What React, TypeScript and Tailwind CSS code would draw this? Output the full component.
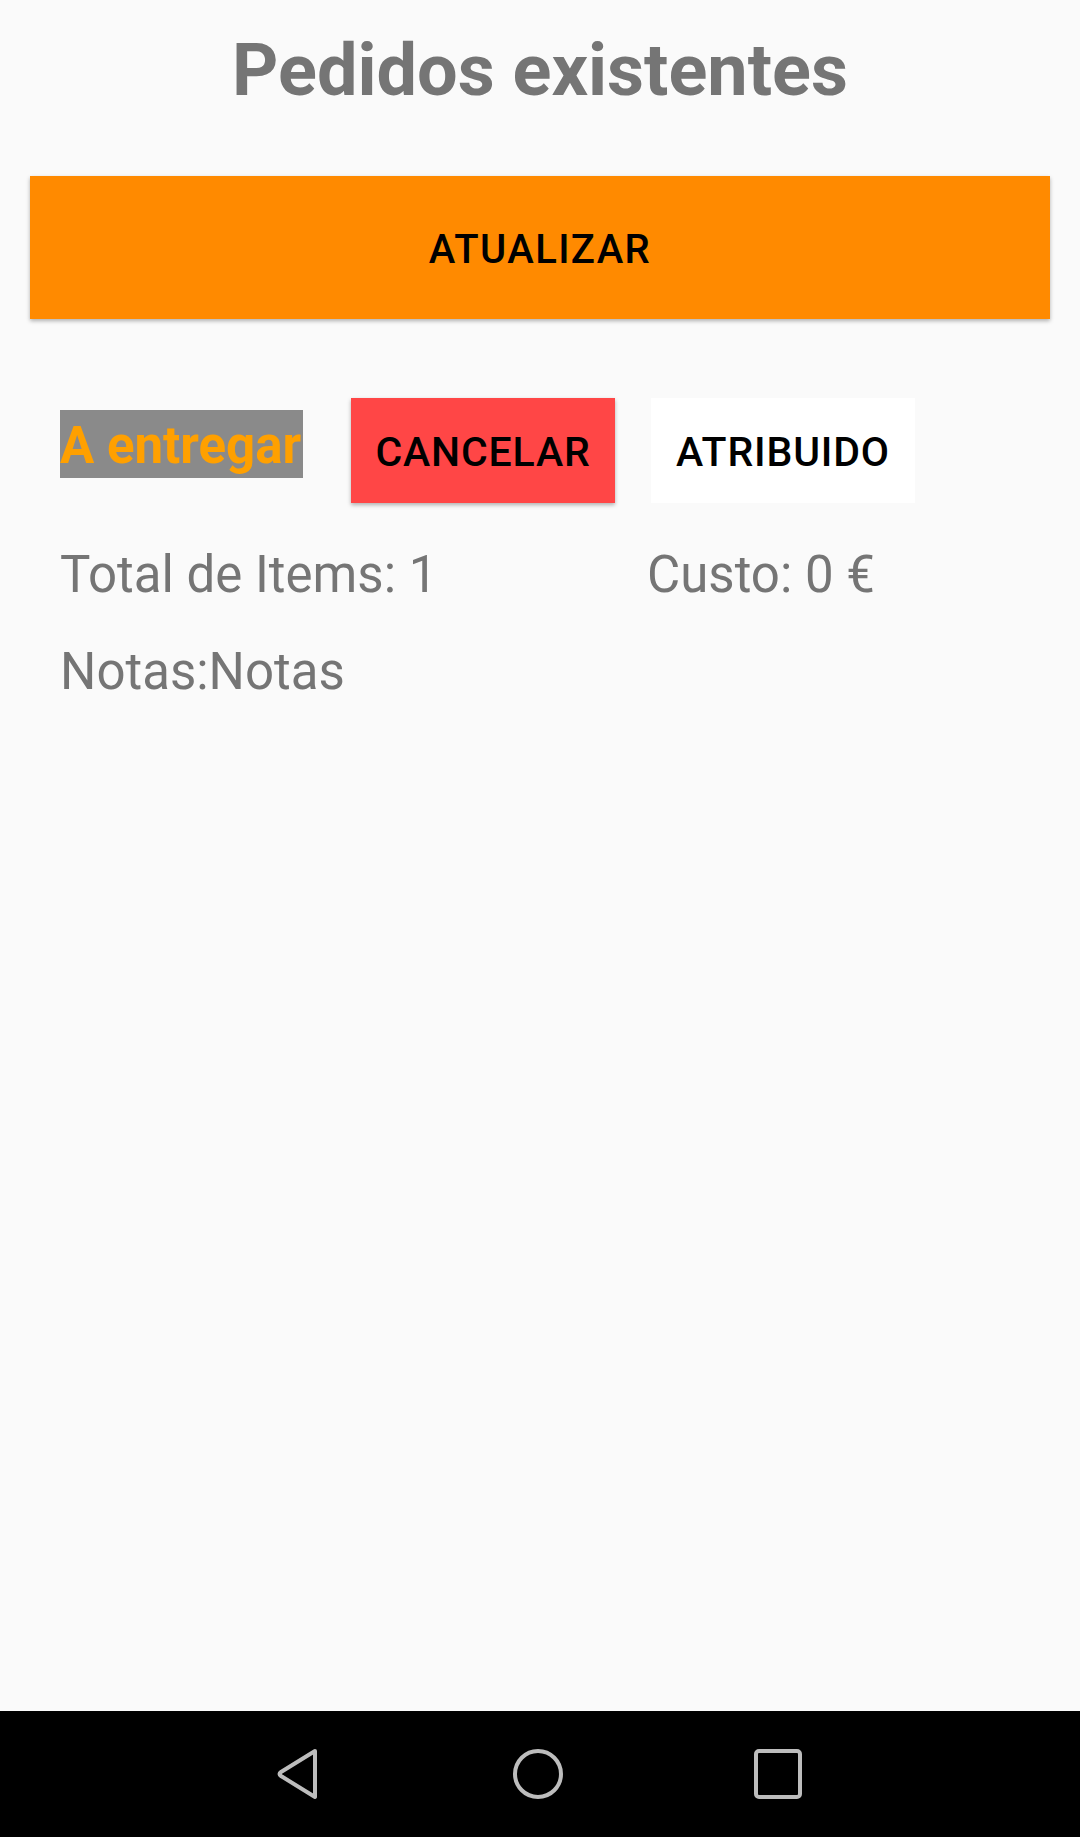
export default function App() {
  return (
    <div className="h-[1837px] w-full flex flex-col bg-[#fafafa] font-['Roboto',sans-serif]">
      <main className="flex-1 flex flex-col">
        {/* Title */}
        <h1 className="pt-[28px] text-center text-[72px] leading-[86px] font-bold text-[#757575]">
          Pedidos existentes
        </h1>

        <button className="mx-[30px] mt-[62px] h-[143px] pt-[4px] bg-[#ff8a00] text-black text-[40px] font-medium tracking-[0.035em] shadow-[0_2px_4px_rgba(0,0,0,0.3)]">
          ATUALIZAR
        </button>

        {/* Order card */}
        <div className="mt-[79px] px-[60px]">
          <div className="flex items-start">
            <div className="mt-[12px] w-[243px] h-[68px] pt-[4px] bg-[#8a8a8a] overflow-hidden flex items-center whitespace-nowrap">
              <span className="text-[51px] leading-[60px] font-bold text-[#ffa000]">A entregar</span>
            </div>
            <button className="ml-[48px] w-[264px] h-[105px] pt-[4px] bg-[#ff4646] text-black text-[41px] font-medium tracking-[0.02em] shadow-[0_2px_4px_rgba(0,0,0,0.3)]">
              CANCELAR
            </button>
            <button className="ml-[36px] w-[264px] h-[105px] pt-[4px] bg-white text-black text-[41px] font-medium tracking-[0.02em]">
              ATRIBUIDO
            </button>
          </div>

          <div className="mt-[41px] flex text-[51px] leading-[61px] text-[#757575]">
            <span className="w-[587px]">Total de Items: 1</span>
            <span>Custo: 0 €</span>
          </div>
          <p className="mt-[36px] text-[51px] leading-[61px] text-[#757575]">Notas:Notas</p>
        </div>
      </main>

      {/* Android navigation bar */}
      <nav className="h-[126px] bg-black flex items-center justify-center">
        <div className="flex items-center">
          <svg width="46" height="54" viewBox="0 0 46 54" className="ml-[-4px]">
            <path d="M40 4 L6 25 Q3 27 6 29 L40 50 Z" fill="none" stroke="#bdbdbd" strokeWidth="4" strokeLinejoin="round" />
          </svg>
          <svg width="54" height="54" viewBox="0 0 54 54" className="ml-[190px]">
            <ellipse cx="27" cy="27" rx="23" ry="23" fill="none" stroke="#bdbdbd" strokeWidth="4" />
          </svg>
          <svg width="48" height="50" viewBox="0 0 48 50" className="ml-[189px]">
            <rect x="2" y="2" width="44" height="46" rx="3" fill="none" stroke="#bdbdbd" strokeWidth="4" />
          </svg>
        </div>
      </nav>
    </div>
  );
}
